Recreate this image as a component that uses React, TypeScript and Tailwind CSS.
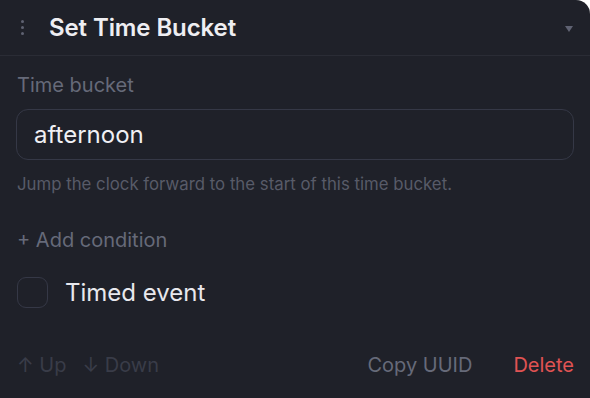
export default function App() {
  return (
    <div
      className="w-[590px] h-[398px] overflow-hidden bg-[#1f2129] rounded-tr-[14px] flex flex-col"
      style={{ fontFamily: 'Inter, "Noto Sans", sans-serif' }}
    >
      <div className="h-[56px] flex items-center border-b border-[#2a2c35] pl-[18px] pr-[17px] shrink-0">
        <div className="w-[8px] flex flex-col items-center gap-[3px]">
          <span className="w-[3px] h-[3px] rounded-full bg-[#5f6272]" />
          <span className="w-[3px] h-[3px] rounded-full bg-[#5f6272]" />
          <span className="w-[3px] h-[3px] rounded-full bg-[#5f6272]" />
        </div>
        <h1 className="ml-[23px] text-[24px] leading-[30px] font-semibold text-[#eeeef2] tracking-[-0.1px]">Set Time Bucket</h1>
        <svg className="ml-auto mt-[3px]" width="8" height="7" viewBox="0 0 8 7">
          <path d="M0 0 H8 L4 6 Z" fill="#5f6272" />
        </svg>
      </div>
      <div className="px-[16px] pt-[17px] flex flex-col">
        <label className="pl-[1px] text-[20px] leading-[24px] text-[#666a79]">Time bucket</label>
        <div className="mt-[12px] h-[51px] w-[558px] rounded-[12px] border border-[#353846] flex items-center pl-[17px] text-[24px] text-[#f0f0f4]">
          afternoon
        </div>
        <p className="mt-[12px] pl-[1px] text-[16.8px] leading-[24px] text-[#585b68]">
          Jump the clock forward to the start of this time bucket.
        </p>
        <div className="mt-[32px] pl-[1px] text-[20px] leading-[24px] text-[#666a79]">+ Add condition</div>
        <div className="mt-[25px] flex items-center">
          <span className="ml-[1px] w-[31px] h-[31px] rounded-[9px] border border-[#353846]" />
          <span className="ml-[17px] text-[24px] leading-[30px] text-[#e8e8ed]">Timed event</span>
        </div>
        <div className="mt-[45px] flex items-center text-[20px] leading-[24px]">
          <span className="pl-[1px] text-[#393c48]">↑ Up</span>
          <span className="ml-[16px] text-[#393c48]">↓ Down</span>
          <span className="ml-auto text-[#666a79]">Copy UUID</span>
          <span className="ml-[41px] text-[#e05353]">Delete</span>
        </div>
      </div>
    </div>
  );
}
